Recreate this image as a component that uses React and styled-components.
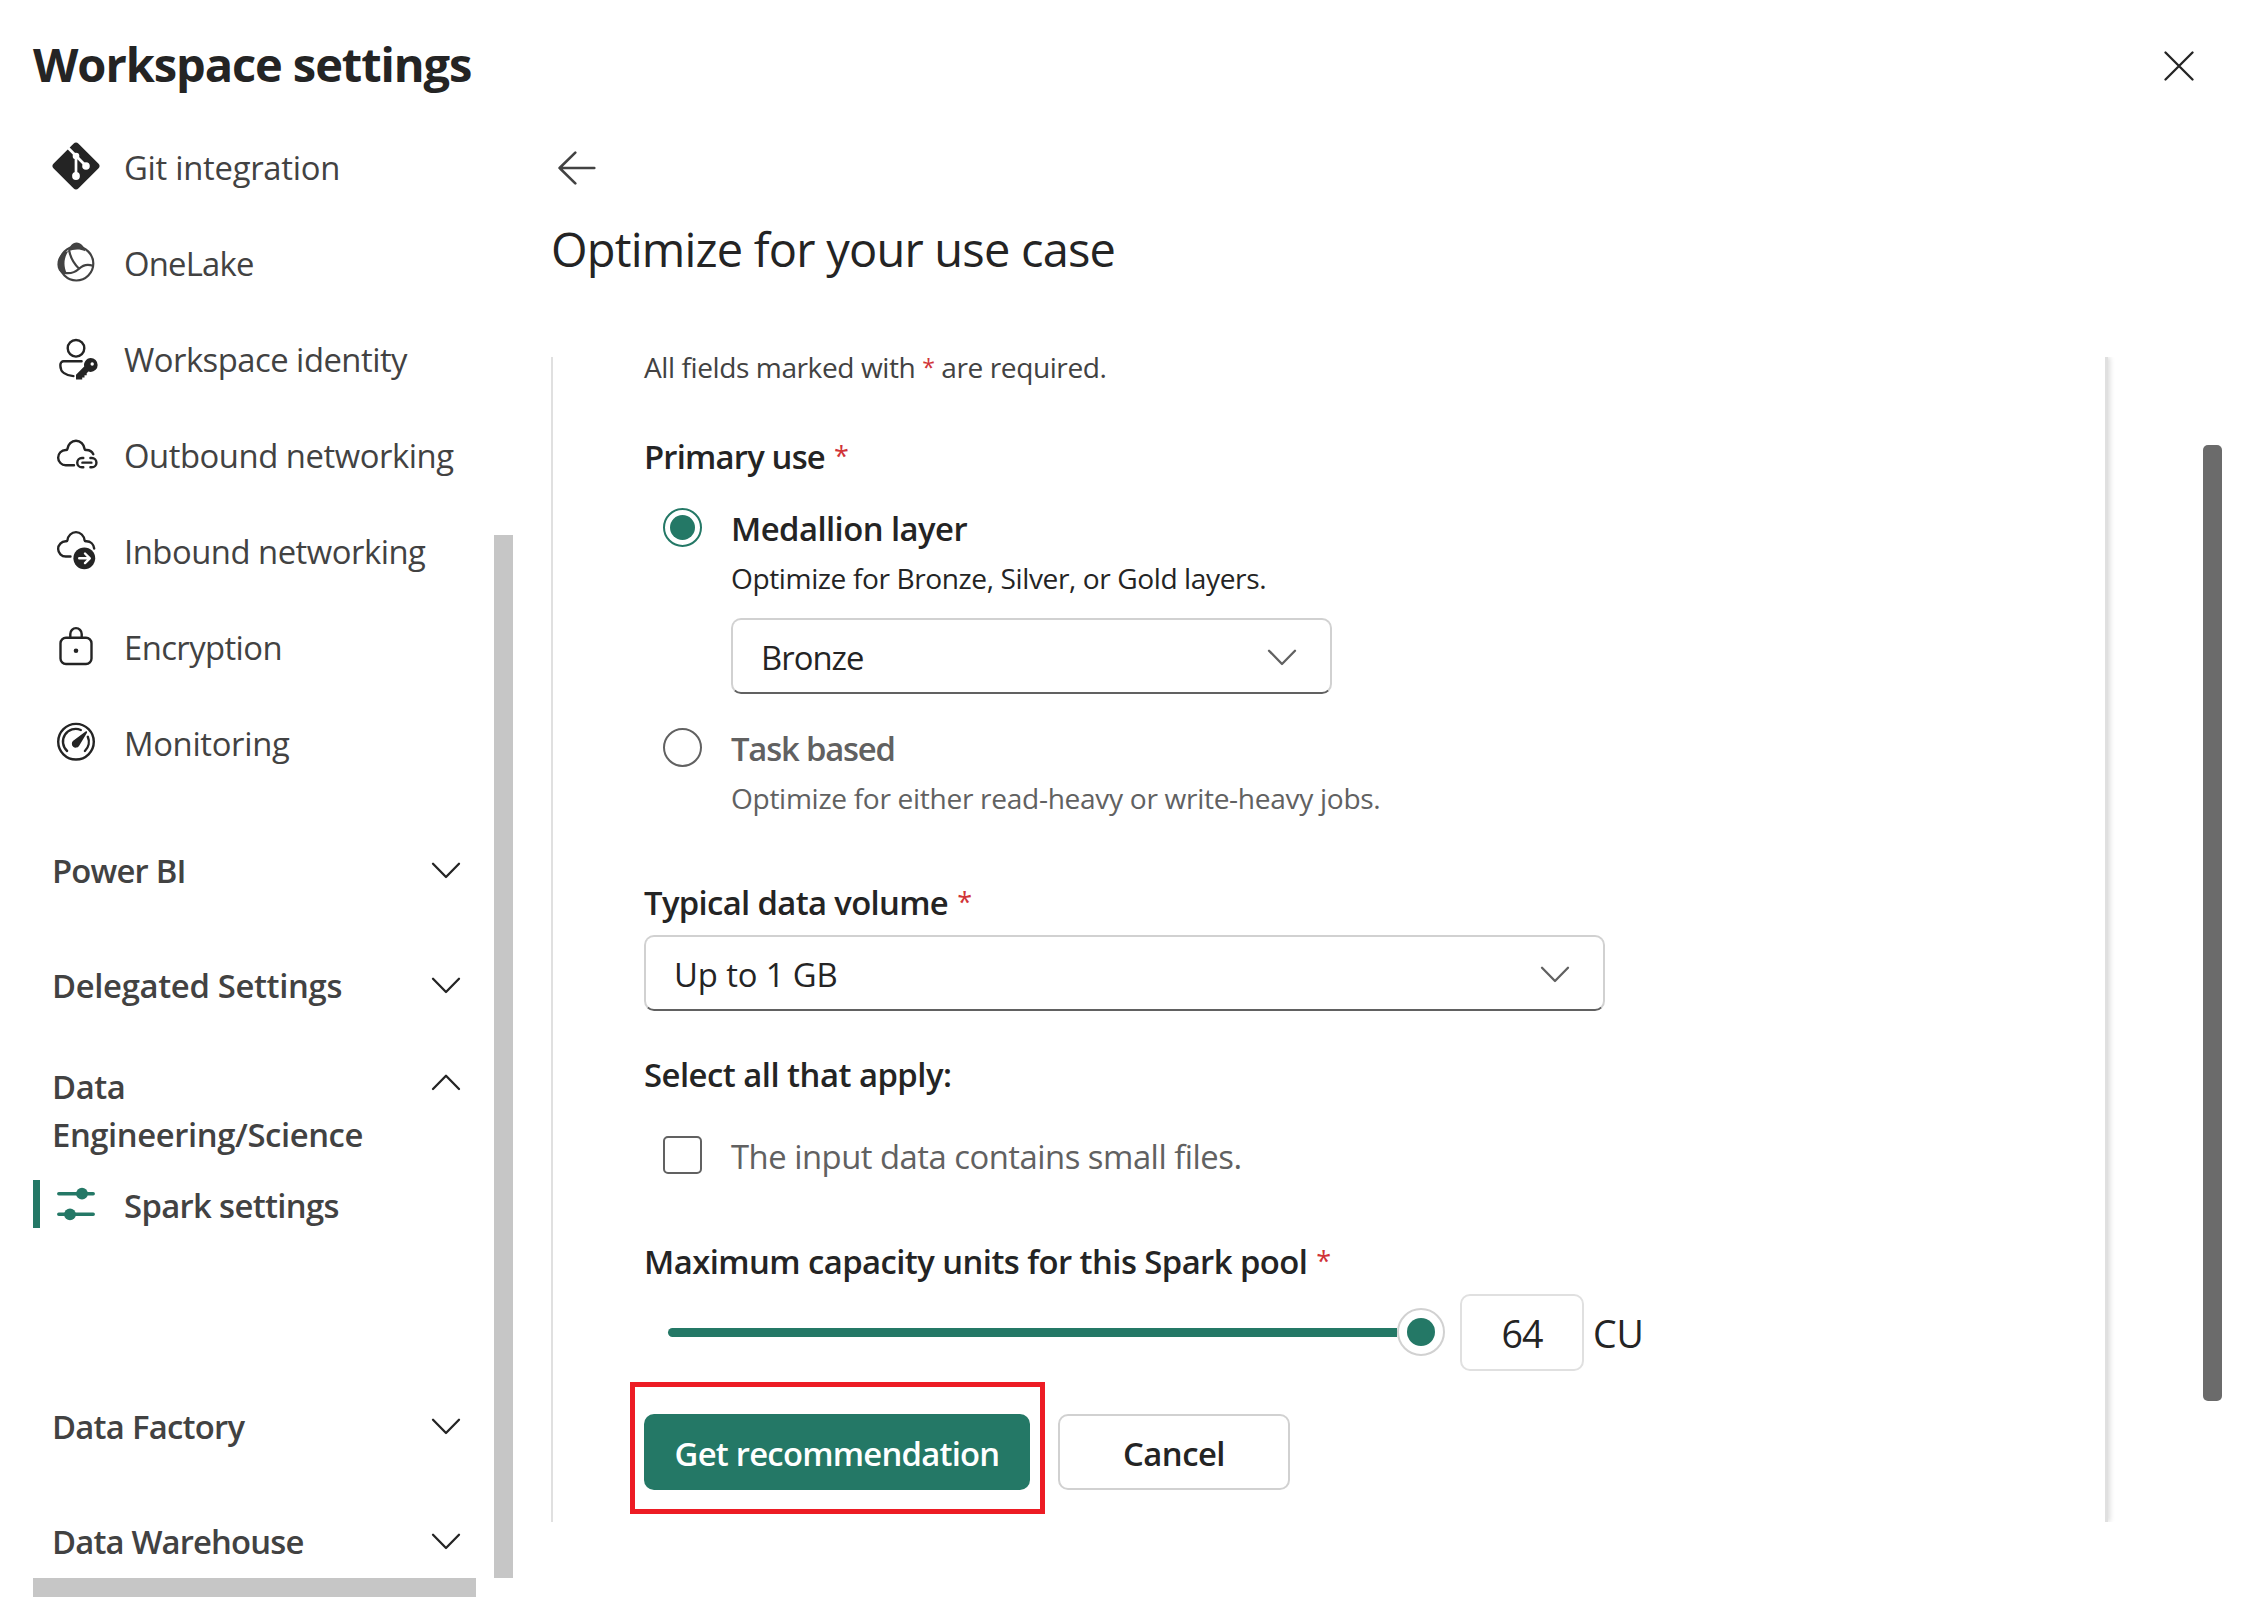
import React,{useState} from 'react'
import styled,{createGlobalStyle} from 'styled-components'

const cloud = "M22 34.2H13.8a7.6 7.6 0 0 1-.1-15.2h.6c.7 0 1-.4 1.1-1C16 13.5 19.5 9.8 24 9.8s8 3.7 8.6 8.2c.1.6.4 1 1.1 1h.8c3 0 5.6 1.6 6.8 4.2"
const cloudShort = "M18.5 34.2H13.8a7.6 7.6 0 0 1-.1-15.2h.6c.7 0 1-.4 1.1-1C16 13.5 19.5 9.8 24 9.8s8 3.7 8.6 8.2c.1.6.4 1 1.1 1h.8c4 0 7.2 3 7.7 7.2"

const GitIcon = () => (
    <Icon>
        <rect x="7.6" y="6.6" width="32.8" height="32.8" rx="2.4" transform="rotate(45 24 23)" fill="#242424"/>
        <g stroke="#fff" strokeWidth="2.7">
            <path d="M15.5 4.2L34 23M24 12.5V33"/>
        </g>
        <g fill="#fff" stroke="none">
            <circle cx="24" cy="13" r="3.3"/>
            <circle cx="34" cy="23" r="3.8"/>
            <circle cx="24" cy="33" r="3.9"/>
        </g>
    </Icon>
)

const OneLakeIcon = () => (
    <Icon $color="#424242">
        <circle cx="24.4" cy="24.6" r="16.9" strokeWidth="2.2"/>
        <path d="M16.3 12.3C9.5 13 5.4 18.5 5.4 25.5c0 4.5 2.2 7.6 5.4 9.3l4-.6c-3.4-7-3.2-15 1.5-21.9z" fill="#424242" stroke="none"/>
        <path d="M15.8 12.9C17.6 7.4 20.4 3.6 24.5 3.6c4.3 0 7.6 3.6 8.7 8.7-5.5-2.5-11.8-2.3-17.4.6z" fill="#424242" stroke="none"/>
        <path d="M17.4 12.5c1.4 7 4.6 12.3 9.7 17.2M11.5 33.7c6 1.4 11.5-.3 15.6-4 3.9-3.9 7.5-5.2 13.7-3" strokeWidth="2.2"/>
    </Icon>
)

const IdentityIcon = () => (
    <Icon>
        <circle cx="24" cy="13.3" r="8.3"/>
        <path d="M29.6 26.3H11.6a3.2 3.2 0 0 0-3.2 3.2V31c0 6 5.5 9.6 13 10.1"/>
        <path d="M38.7 23a6.9 6.9 0 0 1 0 13.9c-.8 0-1.6-.1-2.3-.4l-1.7 1.8v1.9h-2.2v2.3h-2.3v1.9H24v-4.7l8.2-8.3c-.9-3.5 2-8.4 6.5-8.4z" fill="#242424" stroke="none"/>
        <circle cx="40.2" cy="29" r="1.7" fill="#fff" stroke="none"/>
    </Icon>
)

const OutboundIcon = () => (
    <Icon>
        <path d={cloud}/>
        <path d="M31.3 27h-1.4a4.65 4.65 0 0 0 0 9.3h1.4M38.4 27h1.4a4.65 4.65 0 0 1 0 9.3h-1.4M30.4 31.65h9"/>
    </Icon>
)

const InboundIcon = () => (
    <Icon>
        <path d={cloudShort} transform="translate(0 -4.7)"/>
        <circle cx="32.3" cy="31.3" r="10.9" fill="#242424" stroke="none"/>
        <path d="M27.2 31.3h10M33 26.5l4.8 4.8-4.8 4.8" stroke="#fff"/>
    </Icon>
)

const LockIcon = () => (
    <Icon>
        <rect x="8.5" y="14.7" width="31" height="26.3" rx="5.5"/>
        <path d="M18.3 14.7V11a5.7 5.9 0 0 1 11.4 0v3.7"/>
        <circle cx="24" cy="27.7" r="2.3" fill="#242424" stroke="none"/>
    </Icon>
)

const MonitorIcon = () => (
    <Icon>
        <circle cx="24" cy="22.7" r="17.8"/>
        <path d="M15.1 32a12.7 12.7 0 0 1 13.7-21M35.8 17.8A12.7 12.7 0 0 1 32.9 32"/>
        <path d="M33.6 12.6c.9-.7 1.9.1 1.4 1.1L27 26.9a3.9 3.9 0 1 1-5.8-5.1z" fill="#242424" stroke="none"/>
    </Icon>
)

const SparkIcon = () => (
    <Icon $color="#247866">
        <path d="M6.8 12.7h34.4M6.8 33.3h34.4" strokeWidth="3.5"/>
        <circle cx="30" cy="12.7" r="5.9" fill="#247866" stroke="none"/>
        <circle cx="18" cy="33.3" r="5.9" fill="#247866" stroke="none"/>
    </Icon>
)

const Chevron = ({up,color="#242424"}) => (
    <ChevronSvg viewBox="0 0 36 42" $color={color}>
        <path d={up ? "M5 28l13-13.3L31 28" : "M5 14.7l13 13.3 13-13.3"}/>
    </ChevronSvg>
)

const navItems = [
    {label:"Git integration",icon:<GitIcon/>,spacing:-0.27},
    {label:"OneLake",icon:<OneLakeIcon/>,spacing:-0.78},
    {label:"Workspace identity",icon:<IdentityIcon/>,spacing:-0.51},
    {label:"Outbound networking",icon:<OutboundIcon/>,spacing:-0.45},
    {label:"Inbound networking",icon:<InboundIcon/>,spacing:-0.48},
    {label:"Encryption",icon:<LockIcon/>,spacing:-0.58},
    {label:"Monitoring",icon:<MonitorIcon/>,spacing:-0.32},
]

function Sidebar() {
    return (
        <SidebarContainer>
            <NavList>
                {
                    navItems.map((item)=>(
                        <NavItem key={item.label}>
                            {item.icon}
                            <Label $spacing={item.spacing}>{item.label}</Label>
                        </NavItem>
                    ))
                }
                <Groups>
                    <GroupHeader>
                        <Label $bold $spacing={-0.8}>Power BI</Label>
                        <Chevron/>
                    </GroupHeader>
                    <GroupHeader>
                        <Label $bold $spacing={-0.33}>Delegated Settings</Label>
                        <Chevron/>
                    </GroupHeader>
                    <GroupHeader $open>
                        <Label $bold $spacing={-0.4}>Data<br/>Engineering/Science</Label>
                        <Chevron up/>
                    </GroupHeader>
                    <NavItem $active>
                        <ActiveBar/>
                        <SparkIcon/>
                        <Label $bold $spacing={-0.64}>Spark settings</Label>
                    </NavItem>
                    <GroupHeader $spaced>
                        <Label $bold $spacing={-0.73}>Data Factory</Label>
                        <Chevron/>
                    </GroupHeader>
                    <GroupHeader>
                        <Label $bold $spacing={-0.84}>Data Warehouse</Label>
                        <Chevron/>
                    </GroupHeader>
                </Groups>
            </NavList>
            <VerticalTrack><VerticalThumb/></VerticalTrack>
            <HorizontalThumb/>
        </SidebarContainer>
    )
}

function OptimizeForm() {
    const [layer,setLayer]=useState("medallion");
    const [smallFiles,setSmallFiles]=useState(false);

    return (
        <Viewport>
            <Card>
                <Note>All fields marked with <Star $small>*</Star> are required.</Note>

                <FieldTitle $top={55} $spacing={-0.8}>Primary use<Star>*</Star></FieldTitle>
                <Option onClick={()=>setLayer("medallion")} $top={24}>
                    <Radio $checked={layer==="medallion"}/>
                    <OptionBody>
                        <OptionTitle $spacing={-0.54}>Medallion layer</OptionTitle>
                        <OptionText $spacing={-0.4}>Optimize for Bronze, Silver, or Gold layers.</OptionText>
                        <Select $width={601}>
                            <SelectValue $spacing={-0.97}>Bronze</SelectValue>
                            <Chevron color="#616161"/>
                        </Select>
                    </OptionBody>
                </Option>
                <Option onClick={()=>setLayer("task")} $top={30} $muted>
                    <Radio $checked={layer==="task"}/>
                    <OptionBody>
                        <OptionTitle $spacing={-1.17}>Task based</OptionTitle>
                        <OptionText $spacing={-0.31}>Optimize for either read-heavy or write-heavy jobs.</OptionText>
                    </OptionBody>
                </Option>

                <FieldTitle $top={61} $spacing={-0.64}>Typical data volume<Star>*</Star></FieldTitle>
                <Select $width={961} $top={9}>
                    <SelectValue $spacing={-0.12}>Up to 1 GB</SelectValue>
                    <Chevron color="#616161"/>
                </Select>

                <FieldTitle $top={39} $spacing={-0.5}>Select all that apply:</FieldTitle>
                <CheckRow onClick={()=>setSmallFiles(!smallFiles)}>
                    <CheckBox $checked={smallFiles}/>
                    <Label $muted $spacing={-0.49}>The input data contains small files.</Label>
                </CheckRow>

                <FieldTitle $top={57} $spacing={-0.55}>Maximum capacity units for this Spark pool<Star>*</Star></FieldTitle>
                <SliderRow>
                    <SliderTrack/>
                    <SliderThumb/>
                    <CapacityBox>64</CapacityBox>
                    <Unit>CU</Unit>
                </SliderRow>

                <Buttons>
                    <Highlight>
                        <PrimaryButton>Get recommendation</PrimaryButton>
                    </Highlight>
                    <CancelButton>Cancel</CancelButton>
                </Buttons>
            </Card>
        </Viewport>
    )
}

function App() {
    return (
        <>
        <GlobalStyle/>
        <Page>
            <Header>
                <Title>Workspace settings</Title>
                <CloseIcon viewBox="0 0 30 30">
                    <path d="M1.5 1.5l27 27M28.5 1.5l-27 27"/>
                </CloseIcon>
            </Header>
            <Body>
                <Sidebar/>
                <Main>
                    <BackIcon viewBox="0 0 38 34">
                        <path d="M36.3 17H1.6M17.3 1.6L1.6 17l15.7 15.4"/>
                    </BackIcon>
                    <Heading>Optimize for your use case</Heading>
                    <OptimizeForm/>
                </Main>
                <PageThumb/>
            </Body>
        </Page>
        </>
    )
}

export default App

const GlobalStyle=createGlobalStyle`
*{
box-sizing:border-box;
}
body{
margin:0;
background-color:#fff;
font-family:"Open Sans","Noto Sans",sans-serif;
color:#242424;
}
`
const Page=styled.div`
width:2250px;
height:1623px;
display:flex;
flex-direction:column;
overflow:hidden;
`
const Header=styled.header`
height:119px;
flex-shrink:0;
display:flex;
align-items:center;
justify-content:space-between;
padding:8px 56px 0 33px;
`
const Title=styled.h1`
margin:0;
font-size:47px;
font-weight:700;
line-height:64px;
letter-spacing:-1.08px;
`
const CloseIcon=styled.svg`
width:30px;
height:30px;
margin-top:5px;
fill:none;
stroke:#242424;
stroke-width:2.3;
stroke-linecap:round;
cursor:pointer;
`
const Body=styled.div`
display:flex;
align-items:flex-start;
`
const SidebarContainer=styled.nav`
margin-left:33px;
display:grid;
grid-template-columns:443px 19px;
grid-template-rows:1459px 19px;
column-gap:18px;
`
const NavList=styled.div`
overflow:hidden;
`
const NavItem=styled.div`
height:96px;
display:flex;
align-items:center;
gap:${(props)=>(props.$active ? 0 : 24)}px;
padding-left:${(props)=>(props.$active ? 0 : 19)}px;
cursor:pointer;
${(props)=>props.$active && `
svg{
margin:0 24px 0 12px;
}
`}
`
const ActiveBar=styled.div`
width:7px;
height:48px;
margin-top:-2px;
background-color:#247866;
`
const Icon=styled.svg.attrs({viewBox:"0 0 48 48"})`
width:48px;
height:48px;
flex-shrink:0;
overflow:visible;
fill:none;
stroke:${(props)=>props.$color || "#242424"};
stroke-width:2.4;
stroke-linecap:round;
stroke-linejoin:round;
`
const Label=styled.span`
padding-top:2px;
font-size:32.8px;
line-height:48px;
font-weight:${(props)=>(props.$bold ? 600 : 400)};
letter-spacing:${(props)=>props.$spacing}px;
color:${(props)=>(props.$muted ? "#616161" : "#424242")};
white-space:nowrap;
`
const Groups=styled.div`
padding-top:21px;
`
const GroupHeader=styled.div`
height:115px;
display:flex;
align-items:${(props)=>(props.$open ? "flex-start" : "center")};
justify-content:space-between;
padding:${(props)=>(props.$open ? "19px" : "0")} 12px 0 19px;
margin-top:${(props)=>(props.$spaced ? 115 : 0)}px;
cursor:pointer;
`
const ChevronSvg=styled.svg`
width:36px;
height:42px;
flex-shrink:0;
fill:none;
stroke:${(props)=>props.$color};
stroke-width:2.3;
stroke-linecap:round;
stroke-linejoin:round;
`
const VerticalTrack=styled.div`
padding-top:416px;
`
const VerticalThumb=styled.div`
height:1043px;
background-color:#c6c6c6;
`
const HorizontalThumb=styled.div`
background-color:#c6c6c6;
`
const Main=styled.main`
margin-left:38px;
width:1569px;
padding-top:32px;
`
const BackIcon=styled.svg`
display:block;
width:38px;
height:34px;
margin-left:7px;
fill:none;
stroke:#424242;
stroke-width:2.6;
stroke-linecap:round;
stroke-linejoin:round;
cursor:pointer;
`
const Heading=styled.h2`
margin:32px 0 0;
font-size:47px;
font-weight:400;
line-height:64px;
letter-spacing:-0.79px;
`
const Viewport=styled.div`
margin-top:76px;
height:1165px;
overflow:hidden;
`
const Card=styled.section`
width:1557px;
height:1165px;
padding-left:91px;
border-left:2px solid #e0e0e0;
border-right:3px solid #e0e0e0;
box-shadow:2px 0 5px rgba(0,0,0,0.14);
display:flex;
flex-direction:column;
align-items:flex-start;
`
const Note=styled.p`
margin:0;
font-size:28.1px;
line-height:20px;
letter-spacing:-0.43px;
color:#424242;
`
const Star=styled.span`
font-size:${(props)=>(props.$small ? 23 : 27)}px;
font-weight:400;
line-height:0;
margin-left:${(props)=>(props.$small ? 0 : 9)}px;
vertical-align:${(props)=>(props.$small ? 2 : 3)}px;
color:#d13438;
`
// the -1px bottom keeps the rhythm while the text sits one pixel lower
const FieldTitle=styled.h3`
margin:${(props)=>props.$top+1}px 0 -1px;
font-size:32.8px;
font-weight:600;
line-height:48px;
letter-spacing:${(props)=>props.$spacing}px;
`
const Option=styled.div`
display:flex;
gap:29px;
margin-top:${(props)=>props.$top}px;
padding-left:19px;
color:${(props)=>(props.$muted ? "#616161" : "#242424")};
cursor:pointer;
`
const Radio=styled.div`
width:39px;
height:39px;
margin-top:4px;
border-radius:50%;
border:2px solid ${(props)=>(props.$checked ? "#247866" : "#616161")};
display:flex;
align-items:center;
justify-content:center;
&::after{
content:"";
width:25px;
height:25px;
border-radius:50%;
background-color:${(props)=>(props.$checked ? "#247866" : "transparent")};
}
`
const OptionBody=styled.div`
display:flex;
flex-direction:column;
`
const OptionTitle=styled.div`
margin:1px 0 -1px;
font-size:32.8px;
font-weight:600;
line-height:48px;
letter-spacing:${(props)=>props.$spacing}px;
`
const OptionText=styled.div`
margin-top:7px;
font-size:28.1px;
line-height:38px;
letter-spacing:${(props)=>props.$spacing}px;
& + div{
margin-top:21px;
}
`
const Select=styled.div`
width:${(props)=>props.$width}px;
height:76px;
margin-top:${(props)=>props.$top || 0}px;
padding:2px 30px 0 28px;
display:flex;
align-items:center;
justify-content:space-between;
border:2px solid #d1d1d1;
border-bottom-color:#616161;
border-radius:10px;
cursor:pointer;
`
const SelectValue=styled.span`
padding-top:2px;
font-size:32.8px;
line-height:48px;
letter-spacing:${(props)=>props.$spacing}px;
`
const CheckRow=styled.div`
display:flex;
align-items:center;
gap:29px;
height:48px;
margin-top:34px;
padding-left:19px;
cursor:pointer;
`
const CheckBox=styled.div`
width:39px;
height:38px;
margin-top:-2px;
border:2px solid #616161;
border-radius:5px;
background-color:${(props)=>(props.$checked ? "#247866" : "transparent")};
`
const SliderRow=styled.div`
display:flex;
align-items:center;
margin-top:9px;
padding-left:24px;
`
const SliderTrack=styled.div`
width:729px;
height:9px;
border-radius:5px 0 0 5px;
background-color:#247866;
`
const SliderThumb=styled.div`
width:48px;
height:48px;
margin-top:-1px;
border-radius:50%;
border:2px solid #d1d1d1;
display:flex;
align-items:center;
justify-content:center;
&::after{
content:"";
width:28px;
height:28px;
border-radius:50%;
background-color:#247866;
}
`
const CapacityBox=styled.div`
width:124px;
height:77px;
margin-left:15px;
padding-top:1px;
display:flex;
align-items:center;
justify-content:center;
border:2px solid #e0e0e0;
border-radius:10px;
font-size:37.5px;
letter-spacing:-1px;
`
const Unit=styled.span`
margin-left:9px;
padding-top:1px;
font-size:37.5px;
`
const Buttons=styled.div`
display:flex;
gap:28px;
margin-top:43px;
`
// red callout frame drawn around the primary action
const Highlight=styled.div`
position:relative;
&::after{
content:"";
position:absolute;
top:-32px;
right:-15px;
bottom:-24px;
left:-14px;
border:5px solid #ed1c24;
pointer-events:none;
}
`
const Button=styled.button`
height:76px;
padding:4px 0 0;
border-radius:10px;
font-family:inherit;
font-size:32.8px;
font-weight:600;
line-height:48px;
cursor:pointer;
`
const PrimaryButton=styled(Button)`
width:386px;
border:none;
background-color:#247866;
color:#fff;
letter-spacing:-0.75px;
`
const CancelButton=styled(Button)`
width:232px;
border:2px solid #d1d1d1;
background-color:#fff;
color:#242424;
letter-spacing:-0.5px;
`
const PageThumb=styled.div`
width:19px;
height:956px;
margin-left:83px;
margin-top:326px;
border-radius:5px;
background-color:#6b6b6b;
`
